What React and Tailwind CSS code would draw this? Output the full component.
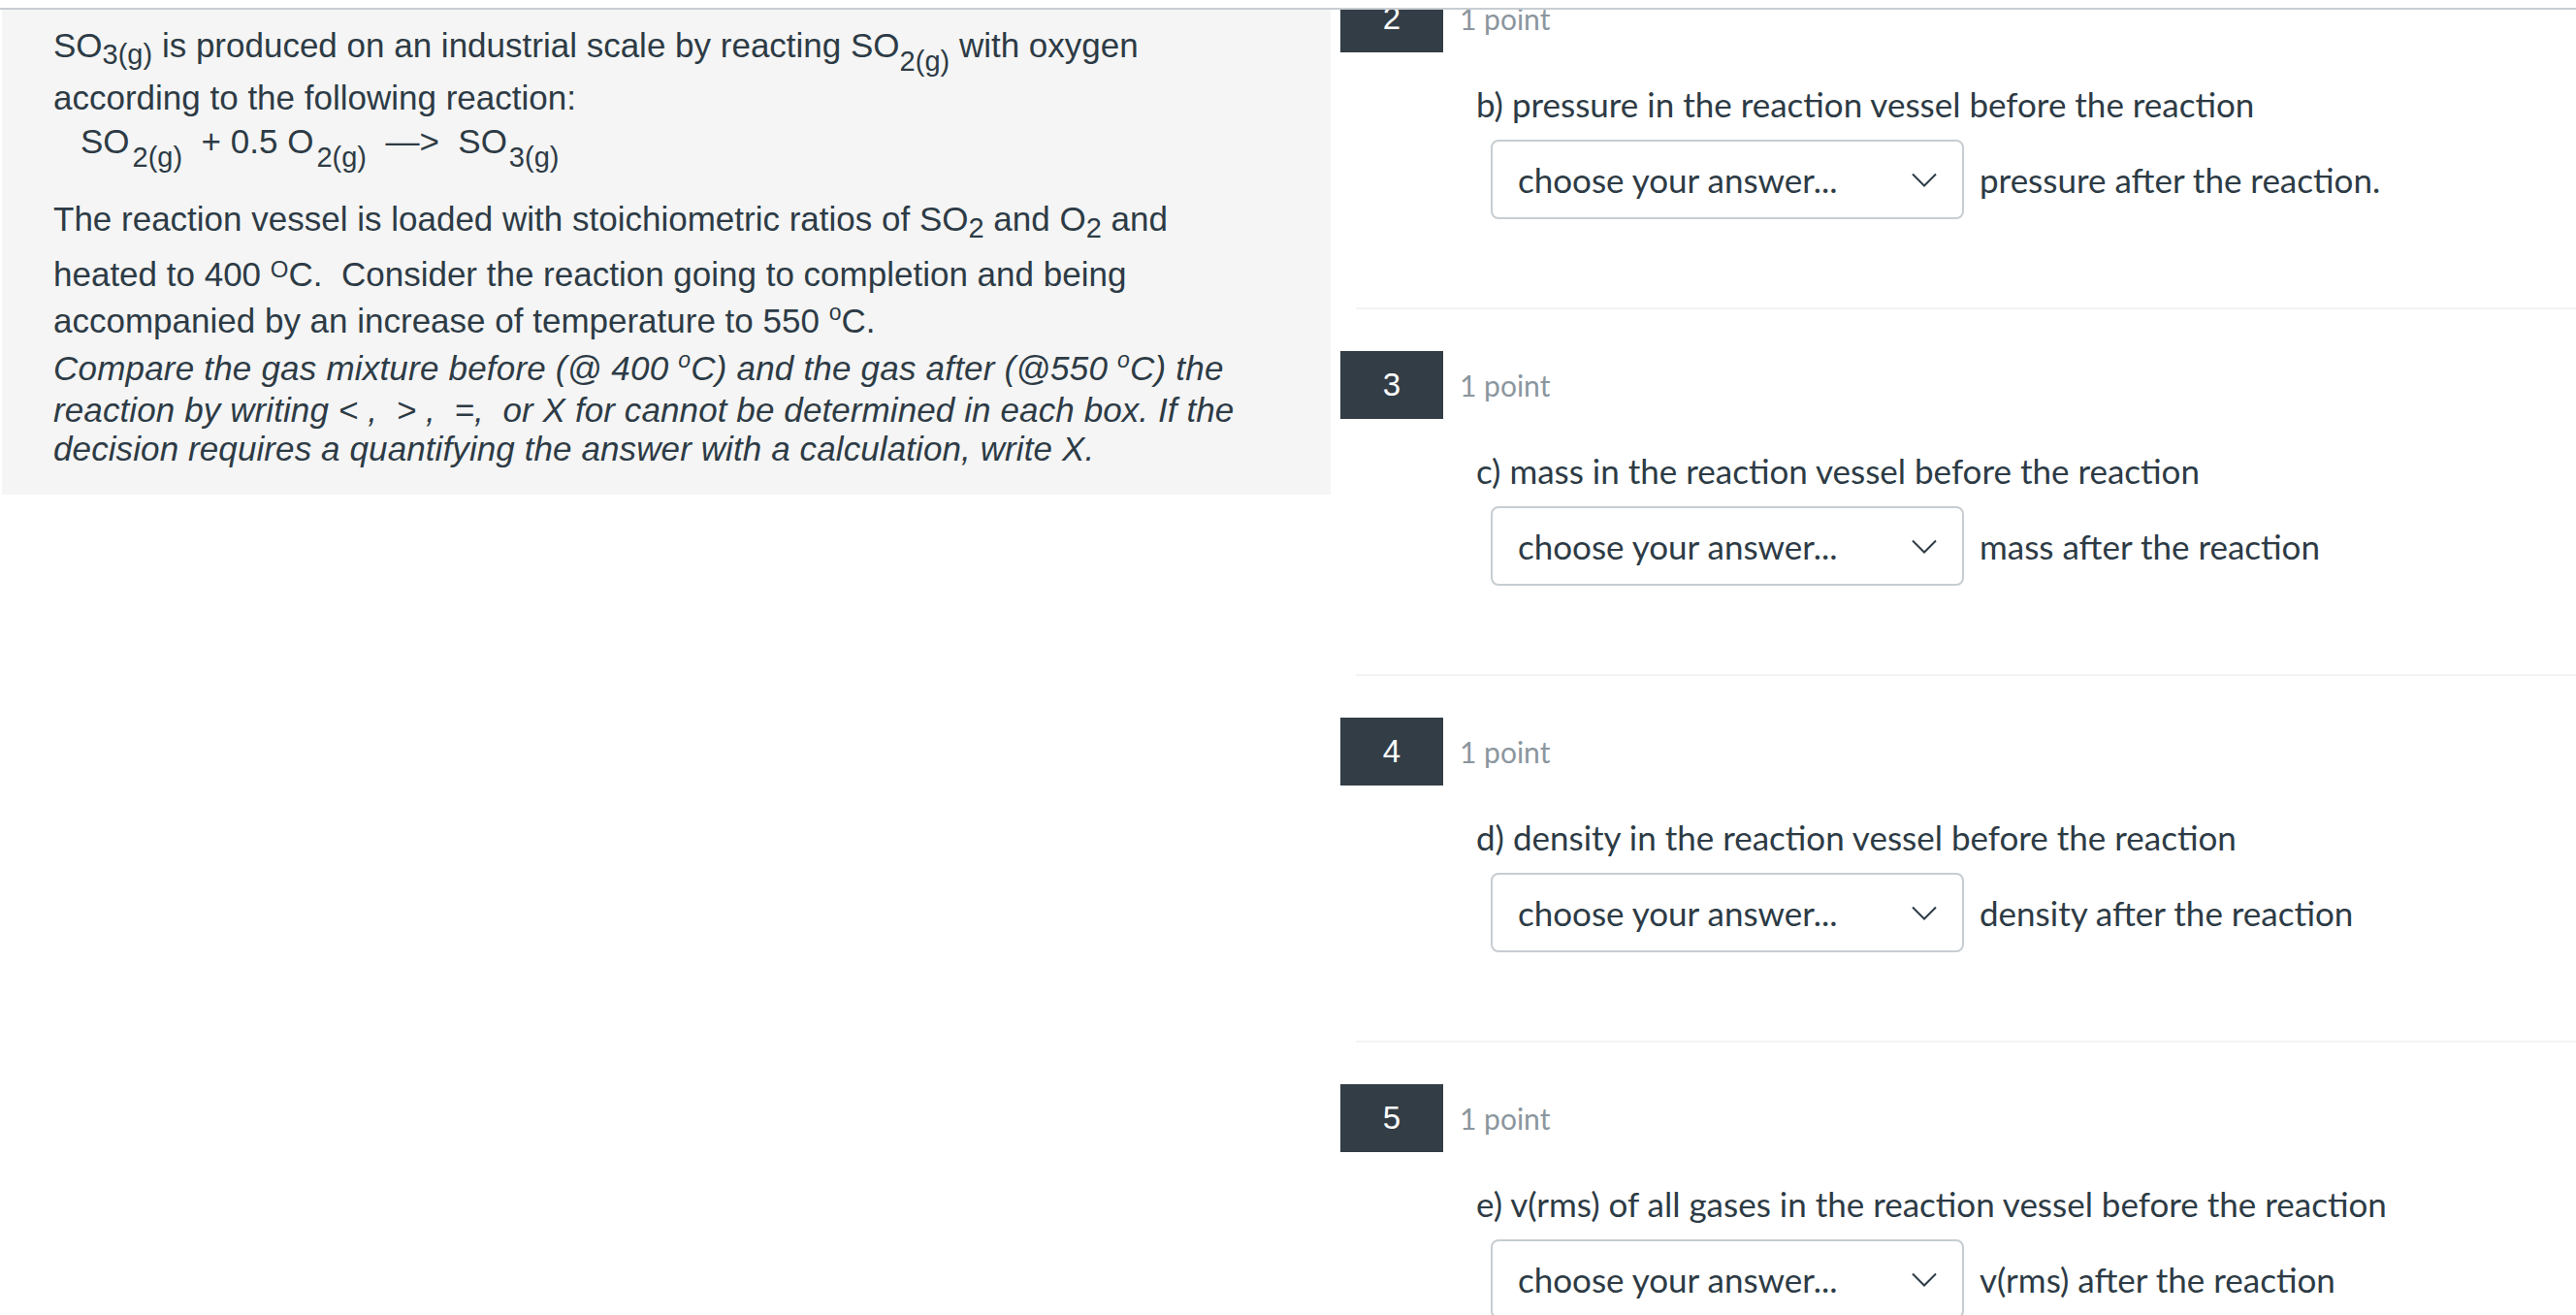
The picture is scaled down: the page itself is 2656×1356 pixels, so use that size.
import React from "react";

function Chevron() {
  return (
    <svg width="26" height="15" viewBox="0 0 26 15" fill="none">
      <polyline points="1,1.5 13,13.5 25,1.5" stroke="#2d3b45" strokeWidth="2" fill="none" />
    </svg>
  );
}

function Question({ num, text, after }) {
  return (
    <div className="flex flex-col">
      <div className="flex items-center h-[70px] ml-[10px]">
        <div className="w-[106px] h-[70px] bg-[#333d46] text-white flex items-center justify-center text-[33px] font-['Liberation_Sans',Arial,sans-serif]">
          {num}
        </div>
        <div className="ml-[17px] text-[30px] text-[#8b969e] leading-none">1 point</div>
      </div>
      <div className="mt-[33px] ml-[150px] h-[40px] leading-[40px] text-[35px] text-[#2d3b45] whitespace-nowrap">
        {text}
      </div>
      <div className="mt-[17px] ml-[165px] flex items-center">
        <div className="w-[488px] h-[82px] border-2 border-[#c7cdd1] rounded-[8px] bg-white flex items-center justify-between pl-[26px] pr-[26px]">
          <span className="text-[35px] text-[#2d3b45]">choose your answer...</span>
          <Chevron />
        </div>
        <span className="ml-[16px] text-[35px] text-[#2d3b45] whitespace-nowrap">{after}</span>
      </div>
      <div className="mt-[91px] ml-[26px] h-[2px] bg-[#f2f3f4]" />
      <div className="h-[43px]" />
    </div>
  );
}

export default function App() {
  const sub = "text-[29px] leading-none relative top-[7px]";
  const subLow = "text-[29px] leading-none relative top-[14px]";
  const supO = "text-[24px] leading-none relative -top-[9px]";
  const supo = "text-[23px] leading-none relative -top-[13px]";
  return (
    <div className="w-[2656px] h-[1356px] overflow-hidden bg-white">
      <div className="h-[8px] bg-white" />
      <div className="border-t-2 border-[#c7cdd1] flex h-[1348px]">
        <div className="ml-[2px] w-[1370px] h-[500px] shrink-0 bg-[#f5f5f5] pl-[53px] pt-[17px] text-[35px] text-[#2d3b45] font-['Liberation_Sans',Arial,sans-serif]">
          <div className="leading-[40px] whitespace-nowrap">
            SO<span className={sub}>3(g)</span> is produced on an industrial scale by reacting SO<span className={subLow}>2(g)</span> with oxygen
          </div>
          <div className="mt-[14px] leading-[40px] whitespace-nowrap">according to the following reaction:</div>
          <div className="mt-[5px] leading-[40px] whitespace-nowrap pl-[28px]">
            SO<span className={subLow + " ml-[3px]"}>2(g)</span>{"\u00a0 + 0.5 O"}<span className={subLow + " ml-[3px]"}>2(g)</span>{"\u00a0 —>\u00a0 SO"}<span className={subLow + " ml-[2px]"}>3(g)</span>
          </div>
          <div className="mt-[40px] leading-[40px] whitespace-nowrap">
            The reaction vessel is loaded with stoichiometric ratios of SO<span className={sub}>2</span> and O<span className={sub}>2</span> and
          </div>
          <div className="mt-[17px] leading-[40px] whitespace-nowrap">
            heated to 400 <span className={supO}>O</span>{"C.\u00a0 Consider the reaction going to completion and being"}
          </div>
          <div className="mt-[8px] leading-[40px] whitespace-nowrap">
            accompanied by an increase of temperature to 550 <span className={supo}>o</span>C.
          </div>
          <div className="italic tracking-[0.1px]">
            <div className="mt-[9px] leading-[40px] whitespace-nowrap tracking-[0.2px]">
              Compare the gas mixture before (@ 400 <span className={supo}>o</span>C) and the gas after (@550 <span className={supo}>o</span>C) the
            </div>
            <div className="mt-[3px] leading-[40px] whitespace-nowrap">
              {"reaction by writing < ,\u00a0 > ,\u00a0 =,\u00a0 or X for cannot be determined in each box. If the"}
            </div>
            <div className="leading-[40px] whitespace-nowrap">
              decision requires a quantifying the answer with a calculation, write X.
            </div>
          </div>
        </div>
        <div className="flex-1 overflow-hidden font-['Lato','Liberation_Sans',sans-serif]">
          <div className="-mt-[26px]">
            <Question num="2" text="b) pressure in the reaction vessel before the reaction" after="pressure after the reaction." />
            <Question num="3" text="c) mass in the reaction vessel before the reaction" after="mass after the reaction" />
            <Question num="4" text="d) density in the reaction vessel before the reaction" after="density after the reaction" />
            <Question num="5" text="e) v(rms) of all gases in the reaction vessel before the reaction" after="v(rms) after the reaction" />
          </div>
        </div>
      </div>
    </div>
  );
}
